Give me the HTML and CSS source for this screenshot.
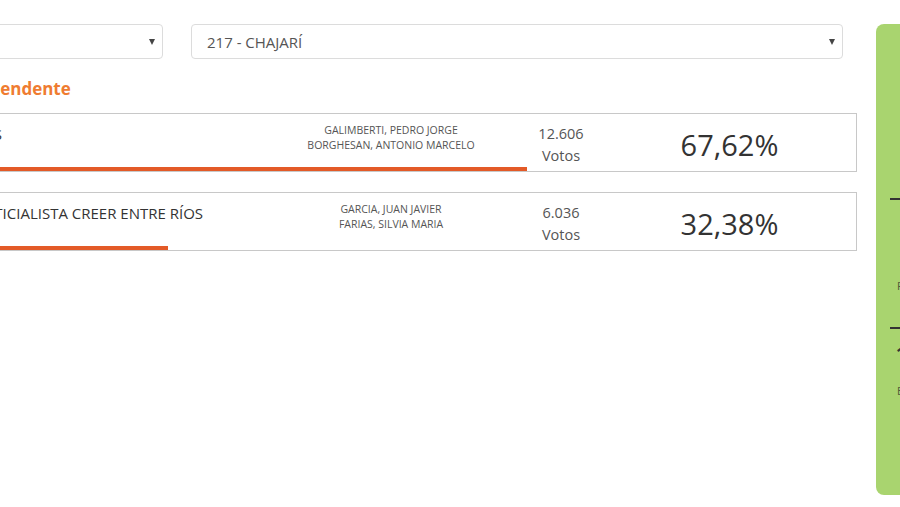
FILE: index.html
```html
<!DOCTYPE html>
<html lang="es">
<head>
<meta charset="utf-8">
<title>Resultados Chajarí</title>
<link rel="stylesheet" href="styles.css">
</head>
<body>
<div class="page">
  <main class="main">
    <div class="filters">
      <div class="select select-a"><span class="select-text">Entre Ríos</span><span class="caret"></span></div>
      <div class="select select-b"><span class="select-text">217 - CHAJARÍ</span><span class="caret"></span></div>
    </div>
    <h2 class="section-title">Intendente</h2>
    <div class="results">
      <div class="result">
        <div class="result-grid">
          <div class="party">CAMBIEMOS</div>
          <div class="candidates">GALIMBERTI, PEDRO JORGE<br>BORGHESAN, ANTONIO MARCELO</div>
          <div class="votes">12.606<br>Votos</div>
          <div class="percent">67,62%</div>
        </div>
        <div class="bar" style="width:67.62%"></div>
      </div>
      <div class="result">
        <div class="result-grid">
          <div class="party">FRENTE JUSTICIALISTA CREER ENTRE RÍOS</div>
          <div class="candidates">GARCIA, JUAN JAVIER<br>FARIAS, SILVIA MARIA</div>
          <div class="votes">6.036<br>Votos</div>
          <div class="percent">32,38%</div>
        </div>
        <div class="bar" style="width:32.38%"></div>
      </div>
    </div>
  </main>
  <aside class="summary">
    <div class="summary-head">
      <div class="summary-title">Mesas escrutadas</div>
      <div class="summary-big">100%</div>
    </div>
    <div class="summary-rule"></div>
    <div class="summary-label">Participación</div>
    <div class="summary-rule second"></div>
    <div class="summary-number">18.642</div>
    <div class="summary-label small">Electores</div>
  </aside>
</div>
</body>
</html>
```
FILE: styles.css
```css
html, body {
  margin: 0;
  padding: 0;
  background: #ffffff;
  overflow: hidden;
}
body {
  width: 900px;
  height: 507px;
  font-family: "Open Sans", "Noto Sans", sans-serif;
  color: #333333;
}
.page {
  display: flex;
  align-items: flex-start;
  gap: 19px;
  margin-left: -162px;
  width: 1300px;
}
.main {
  width: 1019px;
  flex: none;
  padding-top: 24px;
}
.filters {
  display: flex;
  gap: 28px;
}
.select {
  height: 35px;
  box-sizing: border-box;
  border: 1px solid #dcdcdc;
  border-radius: 4px;
  display: flex;
  align-items: center;
  justify-content: space-between;
  padding: 0 7px 0 15px;
  font-size: 15px;
  color: #555555;
}
.select-a {
  width: 325px;
}
.select-a .select-text {
  visibility: hidden;
}
.select-b {
  width: 652px;
}
.caret {
  width: 0;
  height: 0;
  border-left: 3px solid transparent;
  border-right: 3px solid transparent;
  border-top: 6px solid #444444;
}
.section-title {
  margin: 18px 0 12px 138px;
  font-size: 17px;
  line-height: 24px;
  font-weight: 700;
  color: #ef7c31;
}
.results {
  display: flex;
  flex-direction: column;
  gap: 20px;
}
.result {
  height: 59px;
  box-sizing: border-box;
  border: 1px solid #c8c8c8;
  display: flex;
  flex-direction: column;
}
.result-grid {
  flex: 1;
  display: grid;
  grid-template-columns: 452px 200px 140px 1fr;
}
.party {
  padding: 10px 0 0 75px;
  font-size: 15px;
  line-height: 20px;
  color: #333333;
  white-space: nowrap;
}
.candidates {
  padding-top: 9px;
  text-align: center;
  font-size: 10.5px;
  line-height: 15px;
  color: #555555;
}
.votes {
  padding-top: 9px;
  text-align: center;
  font-size: 14.5px;
  line-height: 22px;
  color: #555555;
}
.percent {
  padding: 11px 28px 0 0;
  text-align: center;
  font-size: 29px;
  line-height: 40px;
  font-weight: 500;
  color: #333333;
}
.bar {
  height: 4px;
  background: #e35a27;
  flex: none;
}
.summary {
  width: 250px;
  flex: none;
  margin-top: 24px;
  height: 471px;
  box-sizing: border-box;
  background: #a9d46f;
  border-radius: 8px;
  padding: 20px 14px 0 14px;
}
.summary-head {
  height: 154px;
  text-align: center;
  padding-left: 40px;
}
.summary-title {
  font-size: 13px;
  color: #333333;
  padding-top: 20px;
}
.summary-big {
  font-size: 28px;
  font-weight: 700;
  color: #333333;
}
.summary-rule {
  height: 2px;
  background: #333333;
}
.summary-label {
  margin-top: 78px;
  padding-left: 7px;
  font-size: 11px;
  line-height: 15px;
  color: #4d5a3a;
}
.summary-rule.second {
  margin-top: 34px;
}
.summary-number {
  margin-top: 12px;
  padding-left: 6px;
  font-size: 18px;
  line-height: 24px;
  font-weight: 700;
  color: #333333;
}
.summary-label.small {
  margin-top: 18px;
}
```
